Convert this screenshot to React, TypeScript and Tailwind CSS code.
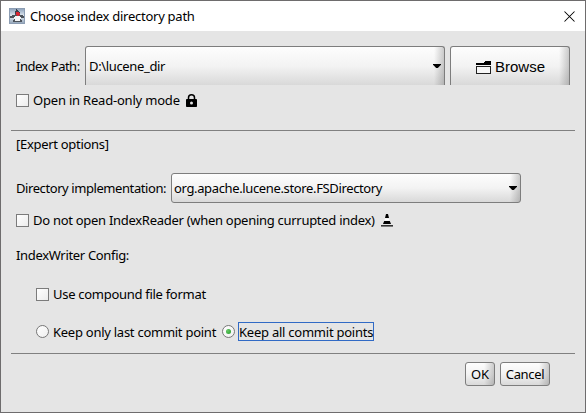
import type { ReactNode } from "react";

function JavaIcon() {
  return (
    <svg width="16" height="16" viewBox="0 0 16 16" shapeRendering="crispEdges">
      <defs>
        <linearGradient id="sky" x1="0" y1="0" x2="0" y2="1">
          <stop offset="0" stopColor="#8ba0ba" />
          <stop offset=".5" stopColor="#e3ebf2" />
          <stop offset="1" stopColor="#93a4b8" />
        </linearGradient>
      </defs>
      <rect x=".5" y=".5" width="15" height="15" fill="url(#sky)" stroke="#8c9db3" />
      <path d="M7 1H8V2H9V3H10V4H11V6H6V3H7Z" fill="#3b414b" />
      <path d="M3 7H6V6H11V7H14V8H15V10H12V12H13V14H4V12H5V10H1V8H3Z" fill="#4d535b" />
      <path d="M6 8H11V9H12V11H11V13H6V11H5V9H6Z" fill="#f4f5f6" />
      <path d="M7 4H10V5H11V7H10V8H8V7H7Z" fill="#d92532" />
    </svg>
  );
}

function Check() {
  return <span className="size-[13px] shrink-0 border border-[#7b7b7b] bg-linear-to-br from-white to-[#ececec]" />;
}

function Radio({ on = false }: { on?: boolean }) {
  return (
    <span className="flex size-[13px] shrink-0 items-center justify-center rounded-full border border-[#777] bg-linear-to-br from-white to-[#efefef]">
      {on && <span className="size-[5px] rounded-full bg-[radial-gradient(circle_at_35%_35%,#62c862,#259b2b)]" />}
    </span>
  );
}

function Arrow() {
  return (
    <svg width="8" height="4" viewBox="0 0 8 4" className="shrink-0">
      <path d="M0 0H8V.8L4.8 4H3.2L0 .8Z" fill="#000" />
    </svg>
  );
}

function Gloss({ className, children }: { className: string; children: ReactNode }) {
  return (
    <div
      className={
        "flex shrink-0 items-center border-[#7d7d7d] bg-[linear-gradient(to_right,transparent_calc(100%-10px),rgba(90,90,90,0.3)),linear-gradient(to_bottom,#fdfdfd,#f3f3f3_50%,#d9d9d9)] " +
        className
      }
    >
      {children}
    </div>
  );
}

export default function App() {
  return (
    <div className="flex h-[413px] w-[586px] flex-col overflow-hidden border border-[#6e6c6d] bg-[#e5e5e5] font-['Noto_Sans',sans-serif] text-[13px] leading-[18px] whitespace-nowrap text-black">
      <header className="flex h-[30px] shrink-0 items-center bg-white pl-2">
        <JavaIcon />
        <span className="ml-[5px] tracking-[-0.26px]">Choose index directory path</span>
        <svg className="mr-[10px] ml-auto" width="11" height="11" viewBox="0 0 11 11">
          <path d="M.5 .5L10.5 10.5M10.5 .5L.5 10.5" stroke="#000" strokeWidth="1.05" fill="none" />
        </svg>
      </header>

      <main className="flex flex-col pl-[15px]">
        <div className="mt-[15px] flex h-[39px]">
          <span className="mt-[11px] w-[69px] shrink-0 tracking-[-0.5px]">Index Path:</span>
          <Gloss className="w-[360px] rounded-t-[3px] border border-b-0 pr-[3px] pl-[3px]">
            <span className="grow tracking-[-0.35px]">D:\lucene_dir</span>
            <Arrow />
          </Gloss>
          <Gloss className="ml-[5px] w-[120px] rounded-t-[3px] border border-b-0 pt-[2px] pl-[25px]">
            <svg width="15" height="13" viewBox="0 0 15 13" shapeRendering="crispEdges">
              <path d="M0 2H8V1H9V0H15V4H0Z" fill="#000" />
              <path d="M.5 5.5H14.5V12.5H.5Z" fill="#f6f6f6" stroke="#222" />
            </svg>
            <span className="ml-[4px] font-['Liberation_Sans',Arial,sans-serif] text-[15px]">Browse</span>
          </Gloss>
        </div>

        <label className="mt-[6px] flex h-[18px] items-center">
          <Check />
          <span className="ml-[4px] tracking-[-0.2px]">Open in Read-only mode</span>
          <svg className="ml-[6px]" width="11" height="13" viewBox="0 0 11 13">
            <path d="M2.5 6V3.8a3 3 0 0 1 6 0V6" fill="none" stroke="#000" strokeWidth="1.5" />
            <rect y="5" width="11" height="8" rx=".8" fill="#000" />
            <circle cx="5.5" cy="9" r="1.5" fill="#e5e5e5" />
          </svg>
        </label>

        <div className="mt-[21px] -ml-[5px] h-px w-[564px] bg-[#808080]" />
        <div className="mt-[4px] h-[18px] tracking-[-0.3px]">[Expert options]</div>

        <div className="mt-[20px] flex h-[30px] items-center">
          <span className="w-[155px] shrink-0 tracking-[-0.42px]">Directory implementation:</span>
          <Gloss className="h-[30px] w-[350px] rounded-[3px] border pr-[3px] pl-[2px]">
            <span className="grow tracking-[-0.36px]">org.apache.lucene.store.FSDirectory</span>
            <Arrow />
          </Gloss>
        </div>

        <label className="mt-[8px] flex h-[18px] items-center">
          <Check />
          <span className="ml-[4px] tracking-[-0.285px]">Do not open IndexReader (when opening currupted index)</span>
          <svg className="ml-[6px]" width="12" height="13" viewBox="0 0 12 13">
            <path d="M5 0H7L8 4H4Z" fill="#000" />
            <path d="M4 4.5H8L8.5 6.5H3.5Z" fill="#fff" />
            <path d="M3.2 7H8.8L10 10H2Z" fill="#000" />
            <path d="M0 11H12V12.6H0Z" fill="#333" />
          </svg>
        </label>

        <div className="mt-[17px] h-[18px] tracking-[-0.33px]">IndexWriter Config:</div>

        <label className="mt-[21px] ml-[20px] flex h-[18px] items-center">
          <Check />
          <span className="ml-[4px] tracking-[-0.29px]">Use compound file format</span>
        </label>

        <div className="mt-[19px] ml-[20px] flex h-[19px] items-center">
          <label className="flex w-[186px] items-center">
            <Radio />
            <span className="ml-[4px] tracking-[-0.26px]">Keep only last commit point</span>
          </label>
          <label className="flex items-center">
            <Radio on />
            <span className="ml-[3px] flex h-[19px] w-[136px] items-center border border-[#316ac5] tracking-[-0.24px]">
              Keep all commit points
            </span>
          </label>
        </div>

        <div className="mt-[12px] -ml-[5px] h-px w-[564px] bg-[#808080]" />
        <div className="mt-[8px] flex justify-end gap-[5px] pr-[35px]">
          <Gloss className="h-[24px] w-[30px] justify-center rounded-[3px] border">
            <span className="tracking-[-0.1px]">OK</span>
          </Gloss>
          <Gloss className="h-[24px] w-[50px] justify-center rounded-[3px] border">
            <span className="tracking-[-0.35px]">Cancel</span>
          </Gloss>
        </div>
      </main>
    </div>
  );
}
